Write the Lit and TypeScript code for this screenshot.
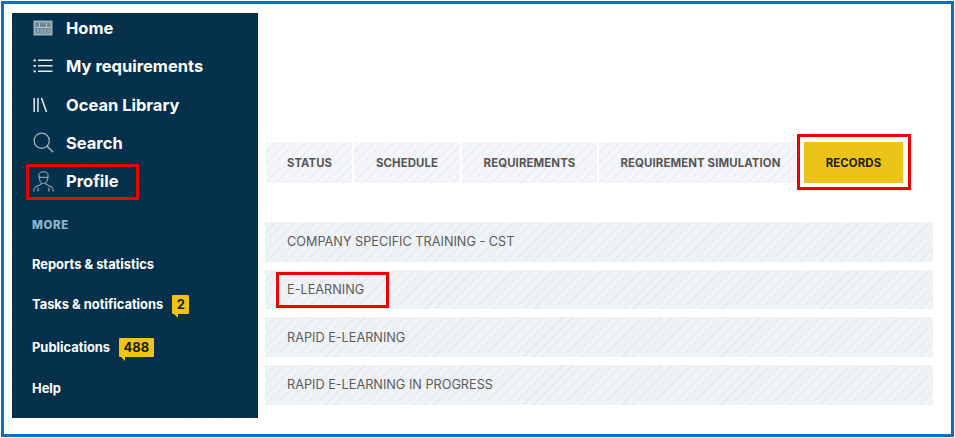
import { LitElement, html, css, svg } from "lit";
import { customElement } from "lit/decorators.js";

const icons: Record<string, unknown> = {
  home: svg`<svg width="20" height="16" viewBox="0 0 20 16"><rect x="0.5" y="0.5" width="19" height="15" fill="#9db0bb"/><rect x="2.500" y="2.500" width="15" height="11" fill="#6b8796"/><path d="M3 7.500h14" stroke="#b4c4cc" stroke-width="1"/><path d="M6.500 3v4M13.500 3v4" stroke="#b4c4cc" stroke-width="1"/><path d="M4 10h12M4 12h12" stroke="#b4c4cc" stroke-width="1.200" stroke-dasharray="2 1.400"/></svg>`,
  list: svg`<svg width="20" height="14" viewBox="0 0 20 14" fill="#e6edf0"><rect x="0.5" y="0.5" width="2.400" height="1.800"/><rect x="5" y="0.5" width="14.500" height="1.500"/><rect x="0.5" y="6" width="2.400" height="1.800"/><rect x="5" y="6" width="14.500" height="1.500"/><rect x="0.5" y="11.500" width="2.400" height="1.800"/><rect x="5" y="11.500" width="14.500" height="1.500"/></svg>`,
  library: svg`<svg width="20" height="16" viewBox="0 0 20 16" fill="none" stroke="#e6edf0" stroke-width="1.500"><path d="M1.200 1v14M5 1v14M8.500 1l5 14"/></svg>`,
  search: svg`<svg width="21" height="21" viewBox="0 0 21 21" fill="none" stroke="#a9bcc6" stroke-width="1.200"><circle cx="8.700" cy="8.700" r="7.600"/><path d="M14.200 14.200l6 6" stroke-width="1.400"/></svg>`,
  profile: svg`<svg width="21" height="21" viewBox="0 0 21 21" fill="none" stroke="#a9bcc6" stroke-width="1"><path d="M6 6.200V3.600C6 2 8 .8 10.500 .8S15 2 15 3.600v2.600"/><path d="M5.400 6.300h10.200"/><path d="M6.300 6.400c0 3.600 1.800 6.100 4.200 6.100s4.200-2.500 4.200-6.100"/><path d="M8 12v1.400l-5 2.200C1.600 16.300 1 17.500 .8 20.500M13 12v1.400l5 2.200c1.400.7 2 1.900 2.200 4.900M5 16.500v4M16 16.500v4"/></svg>`,
};

@customElement("app-root")
export class AppRoot extends LitElement {
  static styles = css`
    :host { display: block; width: 955px; height: 438px; padding: 1px 1px 0 1px; box-sizing: border-box; background: #fff; }
    .frame {
      position: relative; box-sizing: border-box; width: 953px; height: 436px;
      border: 3px solid #0a70c0; display: flex; align-items: stretch;
      padding: 9px 18px 16px 8px; gap: 7px; background: #fff;
      font-family: Inter, "Liberation Sans", sans-serif;
    }
    .side {
      width: 246px; flex: none; box-sizing: border-box; overflow: hidden;
      background-color: #04304b;
      background-image: repeating-linear-gradient(135deg, rgba(255,255,255,.016) 0 1.5px, transparent 1.5px 6px);
      color: #fff; display: flex; flex-direction: column;
    }
    .nav { display: flex; flex-direction: column; margin-top: -4.4px; padding-left: 21px; }
    .nav-item { height: 38.4px; display: flex; align-items: center; font-size: 16.5px; font-weight: 700; color: #fff; }
    .ico { width: 33px; flex: none; display: flex; align-items: center; }
    .more-h { margin: 16px 0 0 20px; font-size: 11.5px; font-weight: 800; letter-spacing: .6px; color: #8cb6cf; line-height: 16px; }
    .more { display: flex; flex-direction: column; margin: 0 0 0 20px; }
    .m { display: flex; align-items: center; font-size: 12.9px; font-weight: 700; color: #fff; }
    .m1 { height: 22px; margin-top: 21px; }
    .m2 { height: 22px; margin-top: 18px; }
    .m3 { height: 22px; margin-top: 21px; }
    .m4 { height: 22px; margin-top: 19px; }
    .badge {
      position: relative; margin-left: 9px; height: 19px; box-sizing: border-box;
      padding: 0 4.5px; background: #f1c40f; color: #1a1a1a; font-size: 12.9px; font-weight: 700;
      display: flex; align-items: center; border-radius: 1px;
    }
    .badge::after {
      content: ""; position: absolute; left: 2px; bottom: -4px; width: 0; height: 0;
      border-top: 4px solid #f1c40f; border-left: 4px solid transparent;
    }
    .main { flex: 1; display: flex; flex-direction: column; padding-top: 129px; min-width: 0; }
    .tabs { display: flex; height: 41px; align-items: stretch; gap: 2px; margin-left: 1px; }
    .stripe {
      background-color: #f5f6f9;
      background-image: repeating-linear-gradient(135deg, #eceff3 0 1.5px, transparent 1.5px 7px);
    }
    .tab {
      display: flex; align-items: center; justify-content: center; box-sizing: border-box;
      font-size: 11.4px; font-weight: 700; color: #555; letter-spacing: .12px; white-space: nowrap;
    }
    .tab:nth-child(1) { padding-left: 1px; font-size: 11.2px; }
    .tab:nth-child(4) { padding-left: 5px; }
    .tab.active {
      margin-left: 5px; background: #ecc417; color: #1c1c1c; width: 99px;
    }
    .rows { display: flex; flex-direction: column; margin-top: 39px; gap: 8px; }
    .row {
      height: 39.7px; display: flex; align-items: center; padding-left: 22px;
      font-size: 12.7px; font-weight: 400; color: #5b5b5b;
      background-color: #f0f3f6;
      background-image: repeating-linear-gradient(135deg, #e8ecf0 0 1.5px, transparent 1.5px 7px);
    }
    .mark { position: absolute; border: 3px solid #ee0000; box-sizing: border-box; pointer-events: none; }
    .mk1 { left: 22px; top: 160px; width: 113px; height: 36px; }
    .mk2 { left: 793px; top: 130px; width: 114px; height: 56px; }
    .mk3 { left: 272px; top: 268px; width: 113px; height: 36px; }
  `;

  render() {
    const nav: [string, string][] = [
      ["home", "Home"], ["list", "My requirements"], ["library", "Ocean Library"],
      ["search", "Search"], ["profile", "Profile"],
    ];
    const tabs: [string, number][] = [
      ["STATUS", 86], ["SCHEDULE", 106], ["REQUIREMENTS", 135], ["REQUIREMENT SIMULATION", 198],
    ];
    const rows = ["COMPANY SPECIFIC TRAINING - CST", "E-LEARNING", "RAPID E-LEARNING", "RAPID E-LEARNING IN PROGRESS"];
    return html`
      <div class="frame">
        <aside class="side">
          <nav class="nav">
            ${nav.map(([i, t]) => html`<div class="nav-item"><span class="ico">${icons[i]}</span>${t}</div>`)}
          </nav>
          <div class="more-h">MORE</div>
          <div class="more">
            <div class="m m1">Reports &amp; statistics</div>
            <div class="m m2">Tasks &amp; notifications<span class="badge">2</span></div>
            <div class="m m3">Publications<span class="badge">488</span></div>
            <div class="m m4">Help</div>
          </div>
        </aside>
        <main class="main">
          <div class="tabs">
            ${tabs.map(([t, w]) => html`<div class="tab stripe" style="width:${w}px">${t}</div>`)}
            <div class="tab active">RECORDS</div>
          </div>
          <div class="rows">
            ${rows.map((r) => html`<div class="row">${r}</div>`)}
          </div>
        </main>
        <div class="mark mk1"></div>
        <div class="mark mk2"></div>
        <div class="mark mk3"></div>
      </div>
    `;
  }
}
